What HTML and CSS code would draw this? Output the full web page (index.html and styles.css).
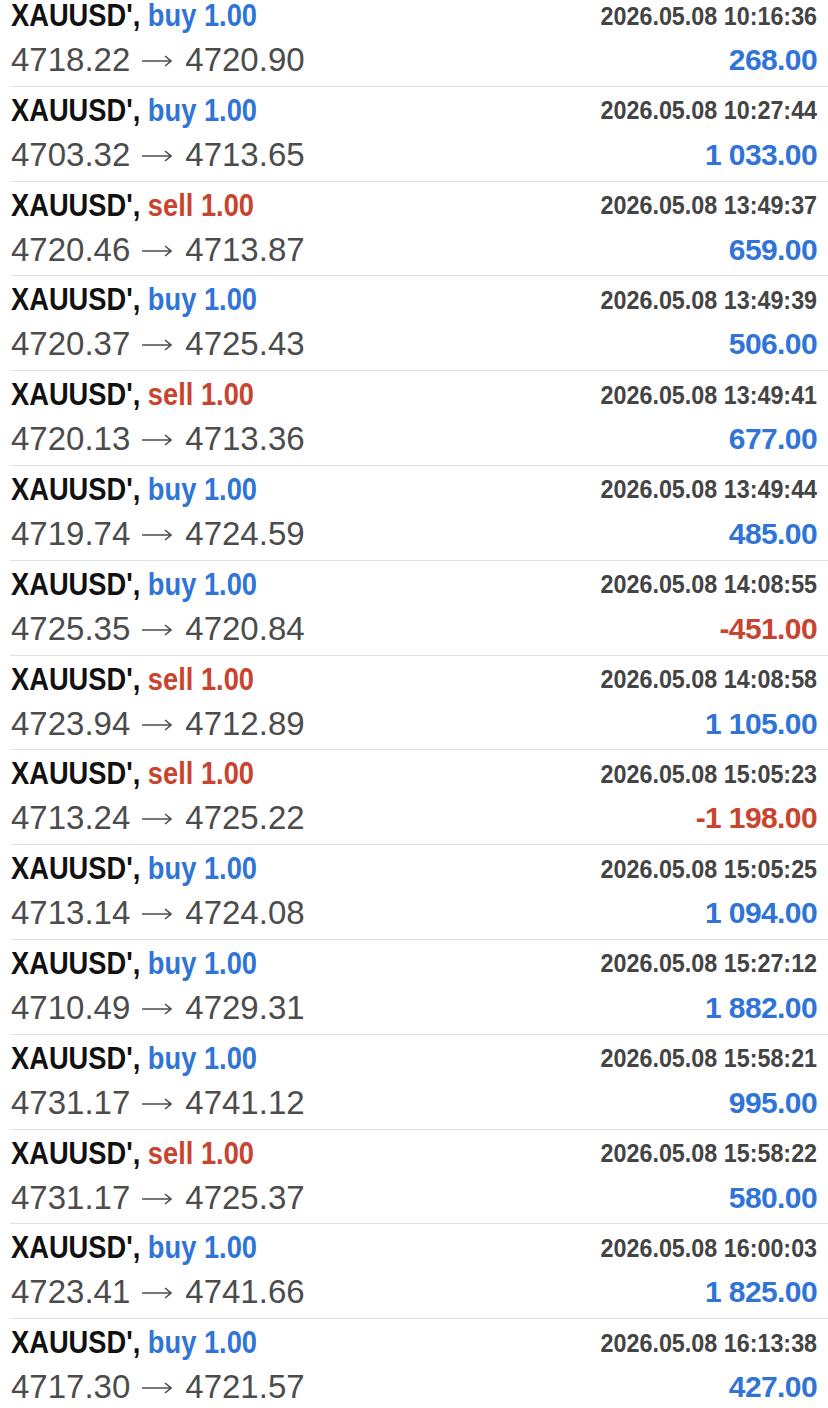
FILE: index.html
```html
<!DOCTYPE html>
<html lang="en">
<head>
    <meta charset="UTF-8">
    <meta name="viewport" content="width=device-width, initial-scale=1.0">
    <title>History</title>
    <link rel="stylesheet" href="styles.css">
</head>
<body>
    <div class="trades">
        <div class="trade">
            <div class="trade-top"><span class="symbol">XAUUSD', <span class="buy">buy 1.00</span></span><span class="date">2026.05.08 10:16:36</span></div>
            <div class="trade-bottom"><span class="prices">4718.22<svg class="arrow" viewBox="0 0 30 12"><path d="M0 6H29M23 1L29 6L23 11"/></svg>4720.90</span><span class="profit">268.00</span></div>
        </div>
        <div class="trade">
            <div class="trade-top"><span class="symbol">XAUUSD', <span class="buy">buy 1.00</span></span><span class="date">2026.05.08 10:27:44</span></div>
            <div class="trade-bottom"><span class="prices">4703.32<svg class="arrow" viewBox="0 0 30 12"><path d="M0 6H29M23 1L29 6L23 11"/></svg>4713.65</span><span class="profit">1 033.00</span></div>
        </div>
        <div class="trade">
            <div class="trade-top"><span class="symbol">XAUUSD', <span class="sell">sell 1.00</span></span><span class="date">2026.05.08 13:49:37</span></div>
            <div class="trade-bottom"><span class="prices">4720.46<svg class="arrow" viewBox="0 0 30 12"><path d="M0 6H29M23 1L29 6L23 11"/></svg>4713.87</span><span class="profit">659.00</span></div>
        </div>
        <div class="trade">
            <div class="trade-top"><span class="symbol">XAUUSD', <span class="buy">buy 1.00</span></span><span class="date">2026.05.08 13:49:39</span></div>
            <div class="trade-bottom"><span class="prices">4720.37<svg class="arrow" viewBox="0 0 30 12"><path d="M0 6H29M23 1L29 6L23 11"/></svg>4725.43</span><span class="profit">506.00</span></div>
        </div>
        <div class="trade">
            <div class="trade-top"><span class="symbol">XAUUSD', <span class="sell">sell 1.00</span></span><span class="date">2026.05.08 13:49:41</span></div>
            <div class="trade-bottom"><span class="prices">4720.13<svg class="arrow" viewBox="0 0 30 12"><path d="M0 6H29M23 1L29 6L23 11"/></svg>4713.36</span><span class="profit">677.00</span></div>
        </div>
        <div class="trade">
            <div class="trade-top"><span class="symbol">XAUUSD', <span class="buy">buy 1.00</span></span><span class="date">2026.05.08 13:49:44</span></div>
            <div class="trade-bottom"><span class="prices">4719.74<svg class="arrow" viewBox="0 0 30 12"><path d="M0 6H29M23 1L29 6L23 11"/></svg>4724.59</span><span class="profit">485.00</span></div>
        </div>
        <div class="trade">
            <div class="trade-top"><span class="symbol">XAUUSD', <span class="buy">buy 1.00</span></span><span class="date">2026.05.08 14:08:55</span></div>
            <div class="trade-bottom"><span class="prices">4725.35<svg class="arrow" viewBox="0 0 30 12"><path d="M0 6H29M23 1L29 6L23 11"/></svg>4720.84</span><span class="profit loss">-451.00</span></div>
        </div>
        <div class="trade">
            <div class="trade-top"><span class="symbol">XAUUSD', <span class="sell">sell 1.00</span></span><span class="date">2026.05.08 14:08:58</span></div>
            <div class="trade-bottom"><span class="prices">4723.94<svg class="arrow" viewBox="0 0 30 12"><path d="M0 6H29M23 1L29 6L23 11"/></svg>4712.89</span><span class="profit">1 105.00</span></div>
        </div>
        <div class="trade">
            <div class="trade-top"><span class="symbol">XAUUSD', <span class="sell">sell 1.00</span></span><span class="date">2026.05.08 15:05:23</span></div>
            <div class="trade-bottom"><span class="prices">4713.24<svg class="arrow" viewBox="0 0 30 12"><path d="M0 6H29M23 1L29 6L23 11"/></svg>4725.22</span><span class="profit loss">-1 198.00</span></div>
        </div>
        <div class="trade">
            <div class="trade-top"><span class="symbol">XAUUSD', <span class="buy">buy 1.00</span></span><span class="date">2026.05.08 15:05:25</span></div>
            <div class="trade-bottom"><span class="prices">4713.14<svg class="arrow" viewBox="0 0 30 12"><path d="M0 6H29M23 1L29 6L23 11"/></svg>4724.08</span><span class="profit">1 094.00</span></div>
        </div>
        <div class="trade">
            <div class="trade-top"><span class="symbol">XAUUSD', <span class="buy">buy 1.00</span></span><span class="date">2026.05.08 15:27:12</span></div>
            <div class="trade-bottom"><span class="prices">4710.49<svg class="arrow" viewBox="0 0 30 12"><path d="M0 6H29M23 1L29 6L23 11"/></svg>4729.31</span><span class="profit">1 882.00</span></div>
        </div>
        <div class="trade">
            <div class="trade-top"><span class="symbol">XAUUSD', <span class="buy">buy 1.00</span></span><span class="date">2026.05.08 15:58:21</span></div>
            <div class="trade-bottom"><span class="prices">4731.17<svg class="arrow" viewBox="0 0 30 12"><path d="M0 6H29M23 1L29 6L23 11"/></svg>4741.12</span><span class="profit">995.00</span></div>
        </div>
        <div class="trade">
            <div class="trade-top"><span class="symbol">XAUUSD', <span class="sell">sell 1.00</span></span><span class="date">2026.05.08 15:58:22</span></div>
            <div class="trade-bottom"><span class="prices">4731.17<svg class="arrow" viewBox="0 0 30 12"><path d="M0 6H29M23 1L29 6L23 11"/></svg>4725.37</span><span class="profit">580.00</span></div>
        </div>
        <div class="trade">
            <div class="trade-top"><span class="symbol">XAUUSD', <span class="buy">buy 1.00</span></span><span class="date">2026.05.08 16:00:03</span></div>
            <div class="trade-bottom"><span class="prices">4723.41<svg class="arrow" viewBox="0 0 30 12"><path d="M0 6H29M23 1L29 6L23 11"/></svg>4741.66</span><span class="profit">1 825.00</span></div>
        </div>
        <div class="trade">
            <div class="trade-top"><span class="symbol">XAUUSD', <span class="buy">buy 1.00</span></span><span class="date">2026.05.08 16:13:38</span></div>
            <div class="trade-bottom"><span class="prices">4717.30<svg class="arrow" viewBox="0 0 30 12"><path d="M0 6H29M23 1L29 6L23 11"/></svg>4721.57</span><span class="profit">427.00</span></div>
        </div>
    </div>
</body>
</html>
```

FILE: styles.css
```css
body {
    margin: 0;
    padding: 0;
    background-color: #fff;
    font-family: "Liberation Sans", Arial, sans-serif;
    overflow: hidden;
}

.trades {
    margin-top: -8px;
}

.trade {
    margin-left: 10px;
    padding: 0 11px 5.8px 1px;
    border-bottom: 1px solid #e2e2e2;
}

.trade-top,
.trade-bottom {
    display: flex;
    justify-content: space-between;
    align-items: center;
    white-space: nowrap;
}

.trade-top {
    height: 48px;
}

.trade-bottom {
    height: 40px;
}

/* no condensed face installed, so squeeze the bold one */
.symbol {
    display: inline-block;
    font-weight: bold;
    font-size: 31px;
    color: #111;
    transform: scaleX(0.88);
    transform-origin: left center;
}

.buy {
    color: #2f74d6;
}

.sell {
    color: #c9442f;
}

.date {
    display: inline-block;
    font-weight: bold;
    font-size: 26.5px;
    color: #444;
    transform: scaleX(0.88);
    transform-origin: right center;
}

.prices {
    display: flex;
    align-items: center;
    font-size: 33px;
    color: #4c4c4c;
}

.arrow {
    width: 30px;
    height: 12px;
    margin: 2px 13px 0 12px;
    fill: none;
    stroke: #4c4c4c;
    stroke-width: 1.6;
}

.profit {
    font-weight: bold;
    font-size: 30px;
    letter-spacing: -0.6px;
    color: #2f74d6;
}

.profit.loss {
    color: #c9442f;
}
```
